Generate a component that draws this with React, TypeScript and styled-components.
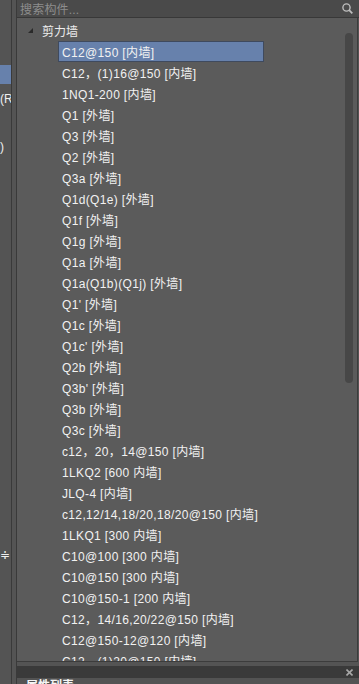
import React from "react";
import styled, { createGlobalStyle } from "styled-components";

const GlobalStyle = createGlobalStyle`
  html, body {
    margin: 0;
    padding: 0;
    background: #545454;
  }
  body {
    font-family: "Liberation Sans", "Noto Sans CJK SC", sans-serif;
    font-size: 12px;
  }
`;

const Page = styled.div`
  width: 359px;
  height: 684px;
  display: flex;
  background: #545454;
  overflow: hidden;
`;

const LeftStrip = styled.div`
  width: 11px;
  flex-shrink: 0;
  border-right: 1px solid #3a3a3a;
  padding-top: 63px;
  overflow: hidden;
`;

const LeftRow = styled.div<{ $selected?: boolean }>`
  height: 24px;
  display: flex;
  align-items: center;
  white-space: nowrap;
  color: #efefef;
  font-size: 12px;
  line-height: 19px;
  box-sizing: border-box;
  ${(p) =>
    p.$selected &&
    `
    & > span {
      display: block;
      width: 11px;
      height: 19px;
      margin-top: -1px;
      background: #6781ac;
    }
  `}
`;

const Main = styled.div`
  flex: 1;
  margin-left: 4px;
  display: flex;
  flex-direction: column;
  border-left: 1px solid #3a3a3a;
  min-width: 0;
`;

const SearchBar = styled.div`
  height: 17px;
  flex-shrink: 0;
  display: flex;
  align-items: center;
  justify-content: space-between;
  padding: 0 6px 0 3px;
  background: #4a4a4a;
  border-bottom: 1px solid #383838;
  color: #8d8d8d;
  font-size: 12px;
  letter-spacing: 0.2px;
`;

const TreePanel = styled.div`
  height: 643px;
  flex-shrink: 0;
  display: flex;
  margin-right: 1px;
  background: #5b5b5b;
  border-right: 1px solid #3c3c3c;
  border-bottom: 1px solid #3c3c3c;
  overflow: hidden;
`;

const TreeList = styled.div`
  flex: 1;
  padding-top: 2px;
  min-width: 0;
`;

const GroupRow = styled.div`
  height: 21px;
  display: flex;
  align-items: center;
  gap: 9px;
  padding-left: 11px;
  color: #ededed;
`;

const ItemRow = styled.div<{ $selected?: boolean }>`
  height: 21px;
  display: flex;
  align-items: center;
  margin-left: 41px;
  box-sizing: border-box;
  white-space: nowrap;
  color: #f2f2f2;
  letter-spacing: 0.35px;
  width: ${(p) => (p.$selected ? "206px" : "auto")};
  background: ${(p) => (p.$selected ? "#6781ac" : "transparent")};
  border: ${(p) => (p.$selected ? "1px solid #3f4a5e" : "none")};
  padding-left: ${(p) => (p.$selected ? "3px" : "4px")};
`;

const ScrollTrack = styled.div`
  width: 8px;
  height: 350px;
  margin: 15px 4px 0 0;
  border-radius: 4px;
  background: #474747;
  flex-shrink: 0;
`;

const Gap = styled.div`
  height: 4px;
  flex-shrink: 0;
`;

const DarkBar = styled.div`
  height: 12px;
  flex-shrink: 0;
  display: flex;
  align-items: center;
  justify-content: flex-end;
  padding-right: 6px;
  background: #3a3a3a;
`;

const PropsPanel = styled.div`
  flex: 1;
  padding: 1px 0 0 9px;
  color: #f5f5f5;
  font-weight: bold;
  font-size: 12px;
  line-height: 14px;
  background: #535353;
  overflow: hidden;
`;

const items: string[] = [
  "C12@150 [内墙]",
  "C12，(1)16@150 [内墙]",
  "1NQ1-200 [内墙]",
  "Q1 [外墙]",
  "Q3 [外墙]",
  "Q2 [外墙]",
  "Q3a [外墙]",
  "Q1d(Q1e) [外墙]",
  "Q1f [外墙]",
  "Q1g [外墙]",
  "Q1a [外墙]",
  "Q1a(Q1b)(Q1j) [外墙]",
  "Q1' [外墙]",
  "Q1c [外墙]",
  "Q1c' [外墙]",
  "Q2b [外墙]",
  "Q3b' [外墙]",
  "Q3b [外墙]",
  "Q3c [外墙]",
  "c12，20，14@150 [内墙]",
  "1LKQ2 [600 内墙]",
  "JLQ-4 [内墙]",
  "c12,12/14,18/20,18/20@150 [内墙]",
  "1LKQ1 [300 内墙]",
  "C10@100 [300 内墙]",
  "C10@150 [300 内墙]",
  "C10@150-1 [200 内墙]",
  "C12，14/16,20/22@150 [内墙]",
  "C12@150-12@120 [内墙]",
  "C12，(1)20@150 [内墙]",
];

// 왼쪽 패널은 잘려서 끝부분만 보임
const leftRows: string[] = ["(R", "", ")"];

function SearchIcon() {
  return (
    <svg width="11" height="11" viewBox="0 0 11 11">
      <circle cx="4.5" cy="4.5" r="3.6" fill="none" stroke="#bdbdbd" strokeWidth="1.4" />
      <line x1="7.2" y1="7.2" x2="10.3" y2="10.3" stroke="#bdbdbd" strokeWidth="1.8" />
    </svg>
  );
}

function Triangle() {
  return (
    <svg width="5" height="5" viewBox="0 0 5 5">
      <polygon points="5,0 5,5 0,5" fill="#2a2a2a" />
    </svg>
  );
}

function CloseIcon() {
  return (
    <svg width="7" height="7" viewBox="0 0 7 7">
      <line x1="0.5" y1="0.5" x2="6.5" y2="6.5" stroke="#a8a8a8" strokeWidth="1.6" />
      <line x1="6.5" y1="0.5" x2="0.5" y2="6.5" stroke="#a8a8a8" strokeWidth="1.6" />
    </svg>
  );
}

export default function App() {
  return (
    <>
      <GlobalStyle />
      <Page>
        <LeftStrip>
          <LeftRow $selected>
            <span />
          </LeftRow>
          {leftRows.map((t, i) => (
            <LeftRow key={i}>{t}</LeftRow>
          ))}
          {Array.from({ length: 16 }).map((_, i) => (
            <LeftRow key={"e" + i} />
          ))}
          <LeftRow>≑</LeftRow>
        </LeftStrip>
        <Main>
          <SearchBar>
            <span>搜索构件...</span>
            <SearchIcon />
          </SearchBar>
          <TreePanel>
            <TreeList>
              <GroupRow>
                <Triangle />
                <span>剪力墙</span>
              </GroupRow>
              {items.map((name, i) => (
                <ItemRow key={i} $selected={i === 0}>
                  {name}
                </ItemRow>
              ))}
            </TreeList>
            <ScrollTrack />
          </TreePanel>
          <Gap />
          <DarkBar>
            <CloseIcon />
          </DarkBar>
          <PropsPanel>属性列表</PropsPanel>
        </Main>
      </Page>
    </>
  );
}
